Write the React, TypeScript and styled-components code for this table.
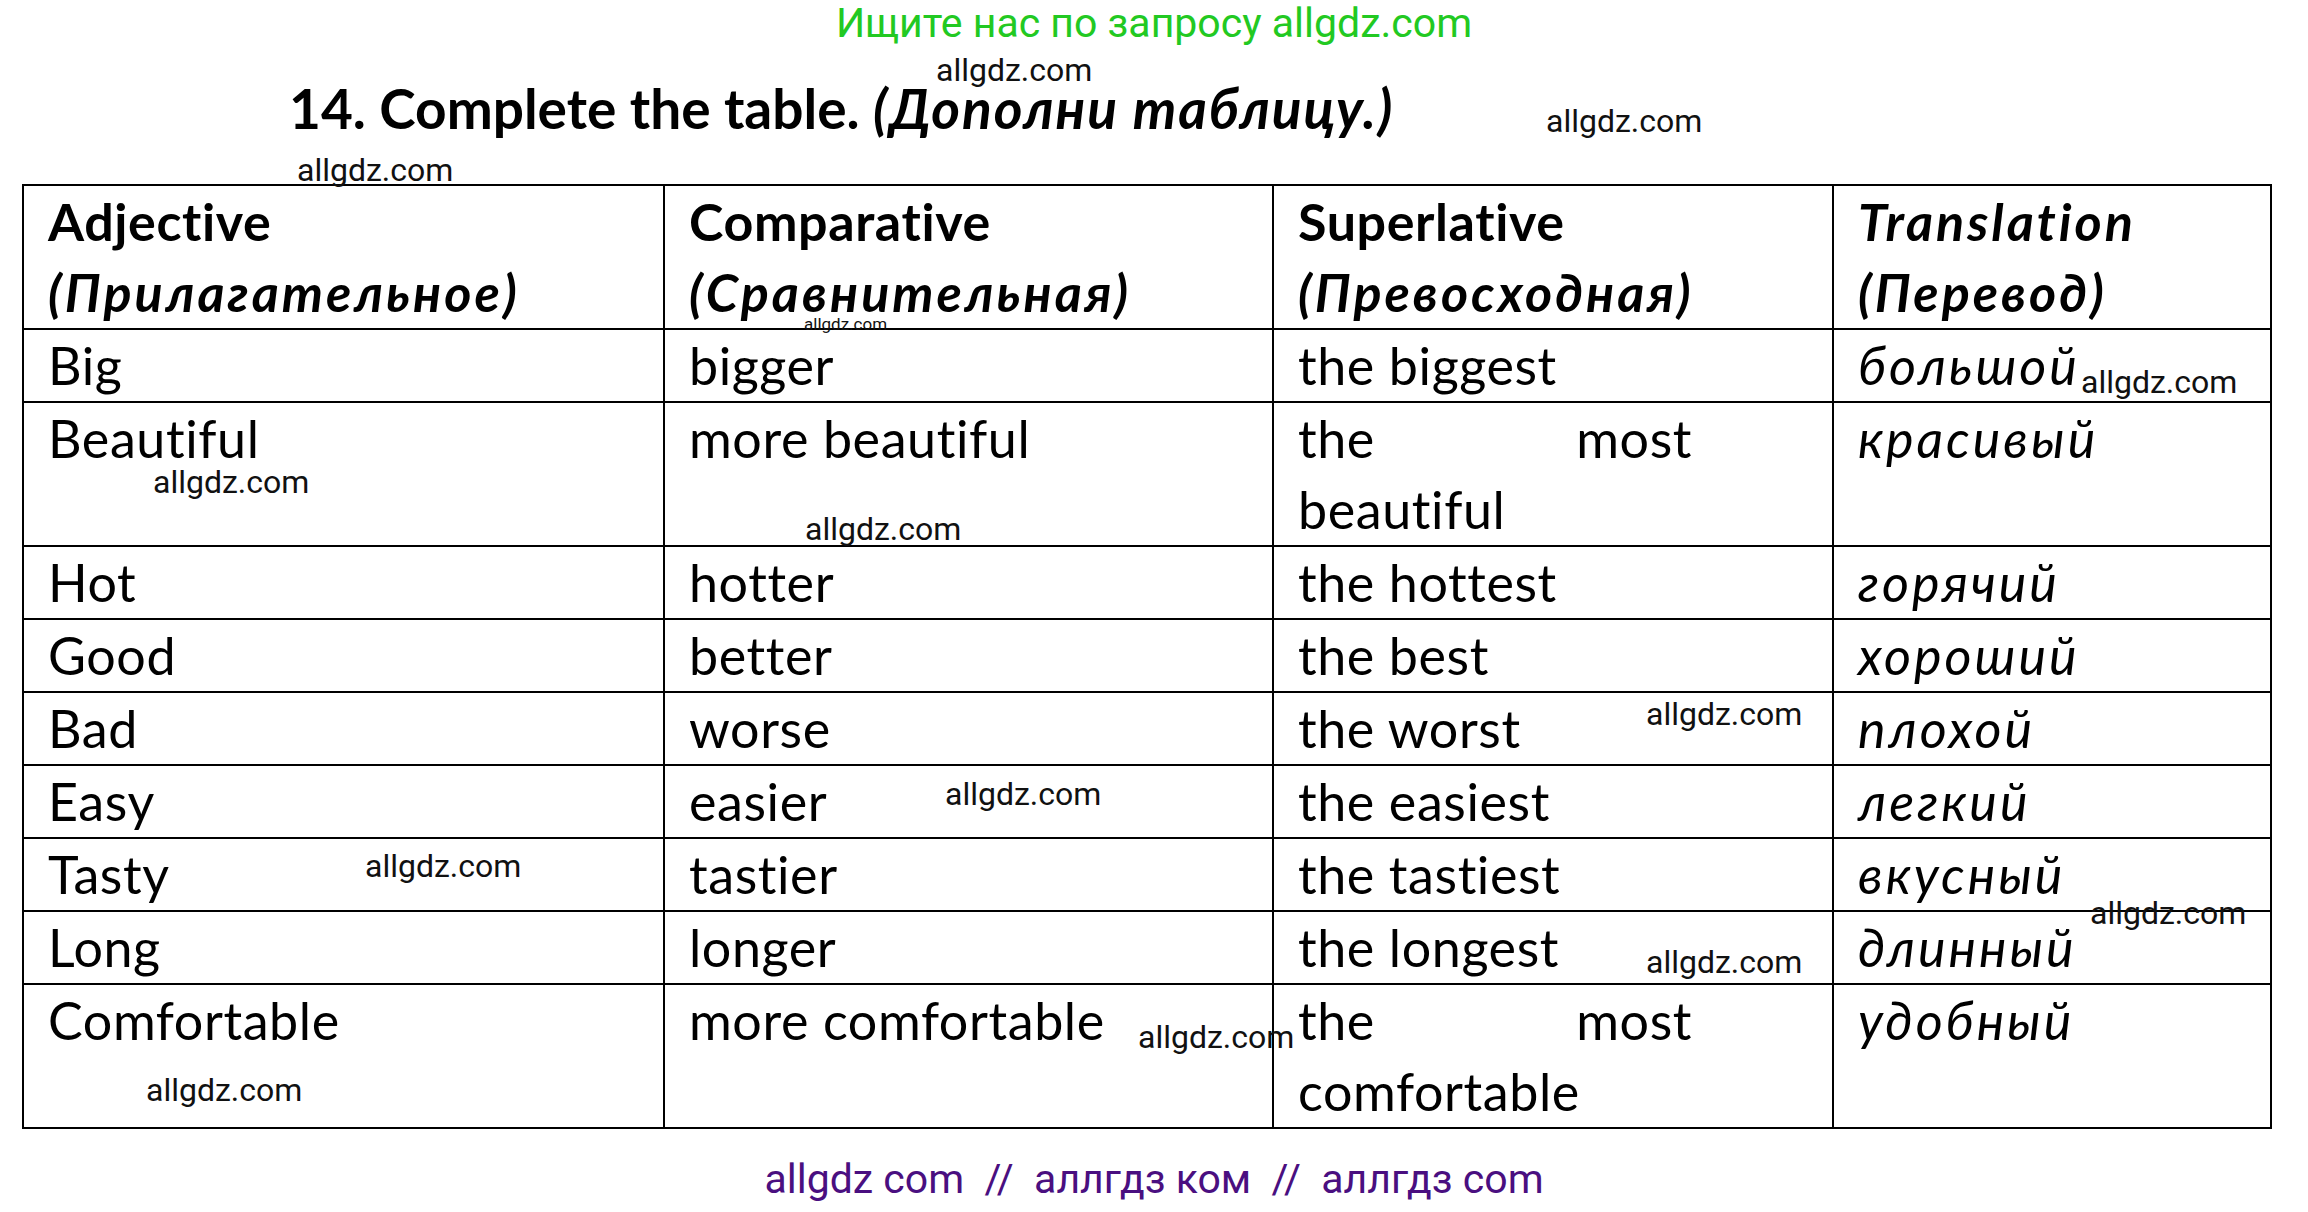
import styled, { createGlobalStyle } from "styled-components"

type Cell = string | [string, string, string]

const rows: Cell[][] = [
  ["Big", "bigger", "the biggest", "большой"],
  ["Beautiful", "more beautiful", ["the", "most", "beautiful"], "красивый"],
  ["Hot", "hotter", "the hottest", "горячий"],
  ["Good", "better", "the best", "хороший"],
  ["Bad", "worse", "the worst", "плохой"],
  ["Easy", "easier", "the easiest", "легкий"],
  ["Tasty", "tastier", "the tastiest", "вкусный"],
  ["Long", "longer", "the longest", "длинный"],
  ["Comfortable", "more comfortable", ["the", "most", "comfortable"], "удобный"],
]

// watermarks scattered over the sheet: [left, top, font size]
const marks: [number, number, number][] = [
  [936, 54, 32],
  [1546, 105, 32],
  [297, 154, 32],
  [804, 316, 17],
  [2081, 366, 32],
  [153, 466, 32],
  [805, 513, 32],
  [1646, 698, 32],
  [945, 778, 32],
  [365, 850, 32],
  [2090, 897, 32],
  [1646, 946, 32],
  [1138, 1021, 32],
  [146, 1074, 32],
]

export default function App() {
  return (
    <>
      <GlobalStyle />
      <Sheet>
        <SearchHint>Ищите нас по запросу allgdz.com</SearchHint>
        <Heading>
          14. Complete the table. <em>(Дополни таблицу.)</em>
        </Heading>
        <Grid>
          <HeadCell>
            Adjective
            <br />
            <em>(Прилагательное)</em>
          </HeadCell>
          <HeadCell>
            Comparative
            <br />
            <em>(Сравнительная)</em>
          </HeadCell>
          <HeadCell>
            Superlative
            <br />
            <em>(Превосходная)</em>
          </HeadCell>
          <HeadCell $italic>
            Translation
            <br />
            (Перевод)
          </HeadCell>
          {rows.map((row, i) =>
            row.map((cell, j) => (
              <BodyCell key={`${i}-${j}`} $italic={j === 3}>
                {typeof cell === "string" ? (
                  cell
                ) : (
                  <>
                    <SpreadLine>
                      <span>{cell[0]}</span>
                      <span>{cell[1]}</span>
                    </SpreadLine>
                    {cell[2]}
                  </>
                )}
              </BodyCell>
            ))
          )}
        </Grid>
        <Footer>{"allgdz com  //  аллгдз ком  //  аллгдз com"}</Footer>
        {marks.map(([x, y, size], i) => (
          <Mark key={i} style={{ left: x, top: y, fontSize: size }}>
            allgdz.com
          </Mark>
        ))}
      </Sheet>
    </>
  )
}

const GlobalStyle = createGlobalStyle`
  html, body {
    margin: 0;
    padding: 0;
    background: #fff;
  }
  body {
    width: 2308px;
    height: 1212px;
    overflow: hidden;
  }
`

const Sheet = styled.div`
  position: relative;
  width: 2308px;
  height: 1212px;
  display: flex;
  flex-direction: column;
  background: #fff;
  color: #000;
`

const SearchHint = styled.div`
  font-family: Roboto, "Liberation Sans", sans-serif;
  font-size: 41px;
  line-height: 46px;
  color: #22c922;
  text-align: center;
`

const Heading = styled.h1`
  margin: 30px 0 0 289px;
  font-family: Lato, "Open Sans", sans-serif;
  font-weight: 700;
  font-size: 55px;
  line-height: 64px;

  em {
    font-style: italic;
    letter-spacing: 1.9px;
  }
`

const Grid = styled.div`
  display: grid;
  grid-template-columns: 641px 609px 560px 438px;
  margin: 44px 0 0 22px;
  width: max-content;
  border-top: 2px solid #000;
  border-left: 2px solid #000;
  font-family: Lato, "Open Sans", sans-serif;
  font-size: 52px;
  line-height: 71px;
  letter-spacing: 0.6px;
`

const BodyCell = styled.div<{ $italic?: boolean }>`
  box-sizing: border-box;
  padding: 0 20px 0 24px;
  border-right: 2px solid #000;
  border-bottom: 2px solid #000;
  font-style: ${(p) => (p.$italic ? "italic" : "normal")};
  letter-spacing: ${(p) => (p.$italic ? "3px" : "0.6px")};
  white-space: nowrap;
`

const HeadCell = styled(BodyCell)`
  font-weight: 700;

  em {
    font-style: italic;
    letter-spacing: 3px;
  }
`

const SpreadLine = styled.span`
  display: flex;
  justify-content: space-between;
  width: 394px;
`

const Footer = styled.div`
  margin-top: 26px;
  font-family: Roboto, "Liberation Sans", sans-serif;
  font-size: 41px;
  line-height: 49px;
  color: #4a0f80;
  text-align: center;
  white-space: pre;
`

const Mark = styled.span`
  position: absolute;
  font-family: Roboto, "Liberation Sans", sans-serif;
  line-height: 1;
  color: #111;
  white-space: nowrap;
`
